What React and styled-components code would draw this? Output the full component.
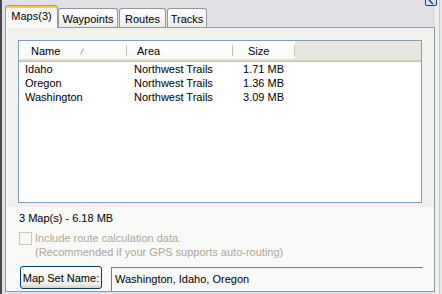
import React from 'react';
import styled, { createGlobalStyle } from 'styled-components';

const Global = createGlobalStyle`
  html, body { margin: 0; padding: 0; background: #e1e0e4; }
  body {
    font-family: "Liberation Sans", Arial, sans-serif;
    font-size: 11px;
    color: #000;
  }
`;

const Window = styled.div`
  position: relative;
  display: flex;
  width: 442px;
  height: 294px;
  overflow: hidden;
  background: #e1e0e4;
`;

const LeftEdge = styled.div`
  flex: none;
  width: 2px;
  background: #484848;
`;

const Main = styled.div`
  flex: 1;
  min-width: 0;
  display: flex;
  flex-direction: column;
  padding: 5px 0 3px 3px;
`;

const RightRail = styled.div`
  flex: none;
  width: 7px;
  background: linear-gradient(to right, #efefef 0 4px, #c9c9c9 4px 5px, #e8e8e8 5px);
`;

const CornerButton = styled.div`
  position: absolute;
  left: 425px;
  top: -6px;
  width: 10px;
  height: 10px;
  border: 1px solid #1d3a66;
  border-radius: 2px;
  background: #dde4ee;
  display: flex;
  align-items: flex-end;
  justify-content: center;
  svg { display: block; }
`;

const TabStrip = styled.div`
  display: flex;
  align-items: flex-end;
  height: 22px;
  flex: none;
`;

const Tab = styled.div`
  position: relative;
  box-sizing: border-box;
  width: ${p => p.$w}px;
  margin-left: ${p => (p.$active ? 0 : p.$first ? 0 : 1)}px;
  display: flex;
  align-items: center;
  justify-content: center;
  border: 1px solid #919b9c;
  border-bottom: none;
  border-radius: 3px 3px 0 0;
  white-space: nowrap;
  ${p =>
    p.$active
      ? `
    height: 23px;
    margin-bottom: -1px;
    z-index: 1;
    background: #fbfbfb;
    border-top: 1px solid #e68b2c;
    box-shadow: inset 0 2px 0 #ffc73c;
    padding-bottom: 3px;
  `
      : `
    height: 19px;
    background: linear-gradient(#ffffff, #ecebe6);
    padding-top: 1px;
  `}
`;

const Panel = styled.div`
  flex: 1;
  display: flex;
  flex-direction: column;
  border: 1px solid #919b9c;
  background: #f9f9f8;
  padding-left: 1px;
`;

const GroupArea = styled.div`
  padding: 12px 12px 4px 11px;
  background: #f1f0ec;
`;

const ListBox = styled.div`
  height: 163px;
  box-sizing: border-box;
  border: 1px solid #7f9db9;
  background: #ffffff;
`;

const cols = '108px 106px 62px 1fr';

const HeaderRow = styled.div`
  display: grid;
  grid-template-columns: ${cols};
  height: 21px;
`;

const HeaderCell = styled.div`
  position: relative;
  display: flex;
  align-items: center;
  gap: 20px;
  padding-left: ${p => p.$pl || 0}px;
  padding-bottom: 2px;
  box-sizing: border-box;
  background: ${p => (p.$filler ? '#e7e6e2' : 'linear-gradient(#ffffff, #f7f7f4)')};
  box-shadow: inset 0 -1px 0 #c5c2b2, inset 0 -2px 0 #d6d3c4, inset 0 -3px 0 #e4e2d6;
  ${p =>
    p.$sep &&
    `&::after {
      content: '';
      position: absolute;
      right: 0;
      top: 4px;
      bottom: 6px;
      width: 1px;
      background: #c7c5b2;
    }`}
`;

const SortArrow = styled.svg`
  display: block;
  margin-top: 1px;
`;

const Row = styled.div`
  display: grid;
  grid-template-columns: ${cols};
  height: 14px;
  line-height: 14px;
  &:first-of-type { margin-top: 1px; }
`;

const Cell = styled.div`
  white-space: nowrap;
  padding-left: ${p => p.$pl || 0}px;
  padding-right: ${p => p.$pr || 0}px;
  text-align: ${p => p.$align || 'left'};
`;

const Status = styled.div`
  margin: 5px 0 0 12px;
  line-height: 13px;
`;

const CheckRow = styled.div`
  display: flex;
  gap: 3px;
  margin: 6px 0 0 12px;
  color: #aca899;
  line-height: 14px;
`;

const CheckBox = styled.div`
  flex: none;
  width: 13px;
  height: 13px;
  box-sizing: border-box;
  border: 1px solid #cac8bb;
  background: #f8f8f6;
  margin-top: 1px;
`;

const FieldRow = styled.div`
  display: flex;
  align-items: flex-start;
  gap: 9px;
  margin: 7px 0 0 13px;
`;

const Button = styled.button`
  width: 82px;
  height: 23px;
  padding: 0;
  border: 1px solid #003c74;
  border-radius: 3px;
  background: linear-gradient(#ffffff, #f0f0ea 80%, #d6d0c5);
  font: inherit;
  color: #000;
  white-space: nowrap;
`;

const TextField = styled.div`
  width: 312px;
  height: 24px;
  margin-top: 1px;
  box-sizing: border-box;
  border-top: 1px solid #7c7c7c;
  border-left: 1px solid #7c7c7c;
  padding: 4px 0 0 3px;
  line-height: 14px;
  white-space: nowrap;
`;

const maps = [
  { name: 'Idaho', area: 'Northwest Trails', size: '1.71 MB' },
  { name: 'Oregon', area: 'Northwest Trails', size: '1.36 MB' },
  { name: 'Washington', area: 'Northwest Trails', size: '3.09 MB' },
];

export default function App() {
  return (
    <>
      <Global />
      <Window>
        <LeftEdge />
        <Main>
          <TabStrip>
            <Tab $active $w={53}>Maps(3)</Tab>
            <Tab $first $w={60}>Waypoints</Tab>
            <Tab $w={47}>Routes</Tab>
            <Tab $w={40}>Tracks</Tab>
          </TabStrip>
          <Panel>
            <GroupArea>
              <ListBox>
                <HeaderRow>
                  <HeaderCell $sep $pl={12}>
                    <span>Name</span>
                    <SortArrow width="8" height="8" viewBox="0 0 8 8">
                      <path d="M0.5 7.5 L3.5 1.5" stroke="#9d9d98" strokeWidth="1" fill="none" />
                      <path d="M4 1.5 L7 7.5" stroke="#f2f2f0" strokeWidth="1" fill="none" />
                    </SortArrow>
                  </HeaderCell>
                  <HeaderCell $sep $pl={10}>Area</HeaderCell>
                  <HeaderCell $sep $pl={15}>Size</HeaderCell>
                  <HeaderCell $filler />
                </HeaderRow>
                {maps.map(m => (
                  <Row key={m.name}>
                    <Cell $pl={6}>{m.name}</Cell>
                    <Cell $pl={7}>{m.area}</Cell>
                    <Cell $align="right" $pr={11}>{m.size}</Cell>
                    <Cell />
                  </Row>
                ))}
              </ListBox>
            </GroupArea>
            <Status>3 Map(s) - 6.18 MB</Status>
            <CheckRow>
              <CheckBox />
              <div>
                Include route calculation data.
                <br />
                (Recommended if your GPS supports auto-routing)
              </div>
            </CheckRow>
            <FieldRow>
              <Button>Map Set Name:</Button>
              <TextField>Washington, Idaho, Oregon</TextField>
            </FieldRow>
          </Panel>
        </Main>
        <RightRail />
        <CornerButton>
          <svg width="6" height="5" viewBox="0 0 6 5">
            <path d="M1 0 L5 4" stroke="#1d3a66" strokeWidth="1.4" />
          </svg>
        </CornerButton>
      </Window>
    </>
  );
}
